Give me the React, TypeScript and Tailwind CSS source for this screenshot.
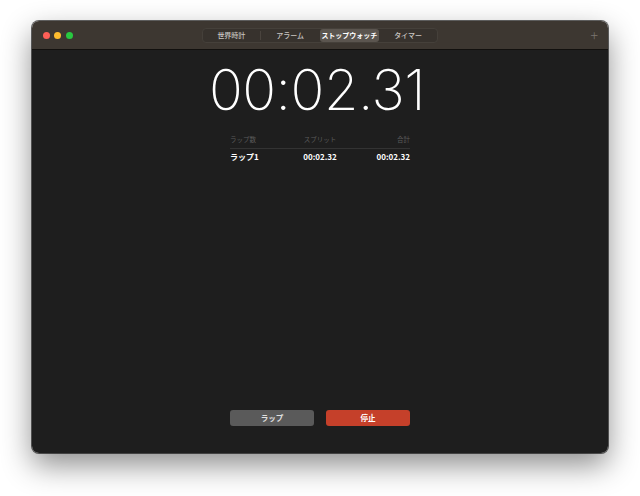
export default function App() {
  const jp = { fontFamily: '"Noto Sans CJK JP", "Noto Sans", sans-serif' };
  return (
    <div className="w-[640px] h-[496px] bg-white pt-[21px] pl-[32px]" style={jp}>
      <div className="w-[576px] h-[432px] rounded-[7px] overflow-hidden flex flex-col shadow-[0_12px_30px_rgba(0,0,0,0.45)] ring-1 ring-black/60">
        <div className="h-[29px] bg-[#3d3731] flex items-center relative border-b border-black/70">
          <div className="flex gap-[4.5px] pl-[10.5px]">
            <div className="w-[7px] h-[7px] rounded-full bg-[#fe5f57]" />
            <div className="w-[7px] h-[7px] rounded-full bg-[#febc2e]" />
            <div className="w-[7px] h-[7px] rounded-full bg-[#28c840]" />
          </div>
          <div className="absolute left-[170px] top-[7px] h-[15px] w-[236px] rounded-[4px] bg-[#37322d] border border-[#45403a] flex items-center text-[7px] font-medium text-[#c9c6c2] whitespace-nowrap">
            <div className="w-[58px] text-center border-r border-[#4a443e] leading-[9px]">世界時計</div>
            <div className="w-[59px] text-center leading-[9px]">アラーム</div>
            <div className="w-[60px] h-[13px] rounded-[3px] bg-[#5b554f] text-white flex items-center justify-center font-bold">ストップウォッチ</div>
            <div className="w-[58px] text-center leading-[9px]">タイマー</div>
          </div>
          <div className="ml-auto mr-[10px] text-[#7a7570] text-[14px] leading-none font-light">+</div>
        </div>
        <div className="flex-1 bg-[#1e1e1e] flex flex-col items-center">
          <div className="mt-[12px] mr-[6px] text-[56px] leading-none text-white font-extralight tracking-[-0.5px]" style={{ fontFamily: 'Inter, "Noto Sans", sans-serif' }}>
            00:02.31
          </div>
          <div className="mt-[17px] w-[180px]">
            <div className="grid grid-cols-3 text-[6.5px] text-[#5c5c5c] pb-[4px] border-b border-[#333333] leading-[9px]">
              <div>ラップ数</div>
              <div className="text-center">スプリット</div>
              <div className="text-right">合計</div>
            </div>
            <div className="grid grid-cols-3 text-[8px] text-white font-bold pt-[3px] leading-[10px]">
              <div>ラップ1</div>
              <div className="text-center">00:02.32</div>
              <div className="text-right">00:02.32</div>
            </div>
          </div>
          <div className="mt-auto mb-[27px] flex gap-[12px]">
            <div className="w-[84px] h-[16px] rounded-[3px] bg-[#5a5a5a] text-[7.5px] text-[#e0e0e0] font-bold flex items-center justify-center">ラップ</div>
            <div className="w-[84px] h-[16px] rounded-[3px] bg-[#c5402a] text-[7.5px] text-white font-bold flex items-center justify-center">停止</div>
          </div>
        </div>
      </div>
    </div>
  );
}
